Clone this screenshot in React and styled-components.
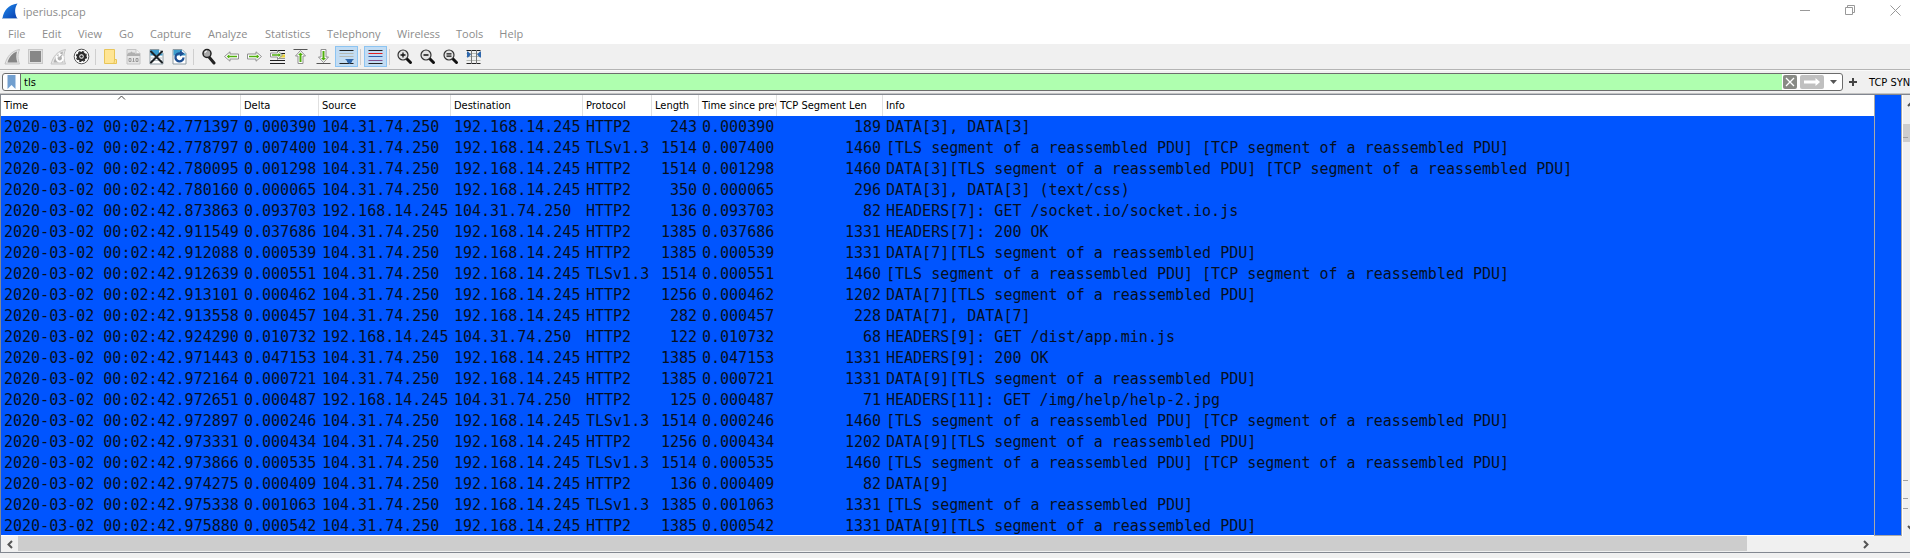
import React from "react";
import styled, { createGlobalStyle } from "styled-components";

const GlobalStyle = createGlobalStyle`
  * { box-sizing: border-box; }
  html, body { margin: 0; overflow: hidden; }
  body { background: #f0f0f0; font-family: "Open Sans", "Noto Sans", sans-serif; font-size: 11px; color: #000; }
  button { font: inherit; color: inherit; background: none; border: 0; padding: 0; margin: 0; }
`;

const Window = styled.main`
  display: flex;
  flex-direction: column;
  width: 100%;
  height: 100vh;
  background: #f0f0f0;
`;

const TitleBar = styled.header`
  display: flex;
  align-items: center;
  flex: none;
  height: 24px;
  padding-left: 2px;
  background: #fff;
`;

const Title = styled.h1`
  flex: 1;
  margin: 0 0 0 5px;
  font-size: 11px;
  font-weight: 400;
  line-height: 16px;
  color: #8c8c8c;
`;

const WindowButton = styled.button`
  display: flex;
  align-items: center;
  justify-content: center;
  width: 45px;
  height: 24px;
  padding-bottom: 4px;
  flex: none;
  color: #999;
`;

const WindowButtons = styled.div`
  display: flex;
  align-items: center;
  margin-right: -8px;
`;

const MenuBar = styled.nav`
  display: flex;
  flex: none;
  height: 21px;
  background: #fff;
  border-bottom: 1px solid #f0f0f0;
`;

const MenuItem = styled.button`
  padding: 0 8px;
  height: 20px;
  line-height: 20px;
  color: #8c8c8c;
  min-width: ${(p) => p.$width}px;
  text-align: left;
`;

const ToolBar = styled.div`
  display: flex;
  align-items: center;
  flex: none;
  height: 25px;
  padding: 0 0 1px 1px;
  border-bottom: 1px solid #b4b4b4;
`;

const ToolButton = styled.button`
  display: flex;
  align-items: center;
  justify-content: center;
  width: 23px;
  height: 21px;
  border: 1px solid ${(p) => (p.$on ? "#8cc4f2" : "transparent")};
  background: ${(p) => (p.$on ? "#c2dcf3" : "transparent")};
`;

const ToolDivider = styled.span`
  width: 1px;
  height: 16px;
  margin: 0 3px 0 2px;
  background: #cfcfcf;
`;

const FilterBar = styled.form`
  display: flex;
  align-items: center;
  flex: none;
  height: 24px;
  margin: 0;
  padding: 2px 0 2px 2px;
  border-top: 1px solid #fafafa;
  border-bottom: 1px solid #c3c3c3;
  overflow: hidden;
  font-family: "DejaVu Sans Condensed", "DejaVu Sans", sans-serif;
`;

const FilterField = styled.div`
  display: flex;
  flex: 1;
  align-items: center;
  height: 18px;
  border: 1px solid #6c6c6c;
  border-radius: 3px;
  background: #fff;
  overflow: hidden;
`;

const BookmarkButton = styled.button`
  display: flex;
  align-items: center;
  justify-content: center;
  width: 18px;
  height: 16px;
  border-right: 1px solid #6c6c6c;
`;

const FilterInput = styled.input`
  flex: 1;
  min-width: 0;
  height: 16px;
  padding: 0 3px;
  border: 0;
  outline: 0;
  background: #afffaf;
  color: #000;
  font: inherit;
`;

const FilterAction = styled.button`
  display: flex;
  align-items: center;
  justify-content: center;
  width: ${(p) => p.$width}px;
  height: 14px;
  margin-left: ${(p) => p.$gap}px;
  border-radius: 2px;
  background: ${(p) => p.$fill || "transparent"};
`;

const AddButton = styled.button`
  display: flex;
  align-items: center;
  justify-content: center;
  width: 20px;
  height: 18px;
  flex: none;
`;

const PresetButton = styled.button`
  flex: none;
  width: 47px;
  padding-left: 6px;
  white-space: nowrap;
  text-align: left;
`;

const PacketPane = styled.section`
  display: flex;
  flex-direction: column;
  flex: 1;
  min-height: 0;
  margin-bottom: 5px;
  border: 1px solid #828790;
  border-right: 0;
`;

const PacketView = styled.div`
  display: flex;
  flex: 1;
  min-height: 0;
`;

const TableArea = styled.div`
  flex: 1;
  min-width: 0;
  overflow: hidden;
  background: #0055ff;
  border-bottom: 1px solid #fff;
`;

const PacketTable = styled.table`
  width: 100%;
  table-layout: fixed;
  border-collapse: separate;
  border-spacing: 0;
`;

const HeadCell = styled.th`
  position: relative;
  height: 21px;
  padding: 1px 0 1px 3px;
  background: #fff;
  border-right: ${(p) => (p.$last ? "0" : "1px solid #e0e0e0")};
  font: 400 11px/19px "DejaVu Sans Condensed", "DejaVu Sans", sans-serif;
  text-align: left;
  white-space: nowrap;
  overflow: hidden;
`;

const SortMark = styled.svg`
  position: absolute;
  top: 0;
  left: calc(50% - 4px);
`;

const Cell = styled.td`
  height: 21px;
  padding: 1px 2px 0 3px;
  font: 15px/20px "DejaVu Sans Mono", "Liberation Mono", monospace;
  color: #06101f;
  text-align: ${(p) => (p.$right ? "right" : "left")};
  white-space: pre;
  overflow: hidden;
`;

const MiniMap = styled.div`
  width: 28px;
  flex: none;
  background: #0055ff;
  border: 1px solid #a9a9a9;
  border-top: 0;
`;

const VerticalTrack = styled.div`
  display: flex;
  flex-direction: column;
  width: 8px;
  flex: none;
  border-left: 1px solid #fff;
  overflow: hidden;
`;

const TrackArrow = styled.button`
  display: flex;
  align-items: center;
  justify-content: center;
  width: 17px;
  height: 17px;
  flex: none;
`;

const VerticalThumb = styled.div`
  display: flex;
  align-items: center;
  width: 17px;
  height: 18px;
  margin-top: 12px;
  padding-top: 8px;
  background: #cdcdcd;
`;

const TrackTick = styled.span`
  display: block;
  width: 5px;
  height: 1px;
  margin-top: ${(p) => p.$gap || 0}px;
  background: #a0a0a0;
`;

const TickGroup = styled.div`
  margin-top: auto;
  margin-bottom: 10px;
`;

const HorizontalTrack = styled.div`
  display: flex;
  flex: none;
  height: 16px;
  padding-right: 36px;
`;

const HorizontalArrow = styled.button`
  display: flex;
  align-items: center;
  justify-content: center;
  width: 17px;
  flex: none;
`;

const HorizontalRail = styled.div`
  flex: 1;
`;

const HorizontalThumb = styled.div`
  width: 94%;
  height: 15px;
  background: #cdcdcd;
`;

const Svg = ({ children, w = 17, h = 17 }) => (
  <svg width={w} height={h} viewBox={`0 0 ${w} ${h}`} fill="none" aria-hidden="true">
    {children}
  </svg>
);

const Page = ({ children }) => (
  <>
    <path d="M2 1.500h9l4 4v10.500H2z" fill="#fff" stroke="#8d9ba3" />
    {children}
  </>
);

const Lens = ({ children }) => (
  <>
    <path d="M10.500 10.500L14.500 14.500" stroke="#111" strokeWidth="3" strokeLinecap="round" />
    <circle cx="7" cy="7" r="5" fill="#e4e4e4" stroke="#333" strokeWidth="1.200" />
    {children}
  </>
);

const Arrow = ({ turn = 0 }) => (
  <g transform={`rotate(${turn} 8.500 8.500)`}>
    <path d="M1.500 8.500L7 3.800V6h8.500v5H7v2.200z" fill="#fff" stroke="#8f8f8f" />
    <path d="M3.800 8.500L6.300 6.300V7.700H14v1.600H6.300v1.400z" fill="#4fae0c" />
  </g>
);

const finOutline = "M1 16C3 9 7 3 15.500 1.500C13.500 6 13.500 11 15.500 16z";
const finCore = "M3.500 14.500C5 9 8.500 5 13 3.500C12 7 12 11 13.500 14.500z";

const icons = {
  start: (
    <>
      <path d={finOutline} fill="#e6e6e6" stroke="#c4c4c4" />
      <path d={finCore} fill="#858585" />
    </>
  ),
  stop: (
    <>
      <rect x="1.500" y="1.500" width="14" height="14" fill="#e0e0e0" stroke="#c8c8c8" />
      <rect x="3" y="3" width="11" height="11" fill="#878787" />
    </>
  ),
  restart: (
    <>
      <path d={finOutline} fill="#e6e6e6" stroke="#c4c4c4" />
      <path d={finCore} fill="#b0b0b0" />
      <path d="M7.500 8a3.200 3.200 0 1 0 4.500 0" stroke="#fff" strokeWidth="2" />
      <path d="M8.500 4.500v5l3.500-3z" fill="#fff" />
    </>
  ),
  options: (
    <>
      <circle cx="8.500" cy="8.500" r="7.300" fill="#fff" stroke="#555" />
      <circle cx="8.500" cy="8.500" r="3.500" stroke="#2b2b2b" strokeWidth="2.500" />
      <circle cx="8.500" cy="8.500" r="5" stroke="#2b2b2b" strokeWidth="1.200" strokeDasharray="2.200 1.727" />
      <circle cx="8.500" cy="8.500" r="1.300" fill="#2b2b2b" />
    </>
  ),
  open: (
    <>
      <path d="M2.500 1.500h10v14h-10z" fill="#ffe594" stroke="#e8c558" />
      <path d="M12.500 11.500h2v4h-4c1.500 0 2-1 2-4z" fill="#ffe594" stroke="#e8c558" />
    </>
  ),
  save: (
    <>
      <path d="M2 1.500h9l4 4v10.500H2z" fill="#e6e6e6" stroke="#c4c4c4" />
      <path d="M2 7c1-2 2-3 3-2 1-2 2-2 3 0 1-1 2 0 3 1h4v2H2z" fill="#b0b0b0" />
      <path d="M11 1.500v4h4" stroke="#c4c4c4" fill="#f5f5f5" />
      <path d="M4 10.500h2v3h-2zM11 10.500h2v3h-2z" stroke="#999" />
      <path d="M8.500 10v4M7.500 13.500h2" stroke="#999" />
    </>
  ),
  close: (
    <Page>
      <path d="M2.500 2h8.500l3.500 3.500v2h-12z" fill="#3c9ccc" />
      <path d="M11 2v3.500h3.500" fill="#fff" />
      <path d="M3 10h11M3 12.500h11" stroke="#b8c0c4" />
      <path d="M3 3.500L14 14.500M14 3.500L3 14.500" stroke="#1c2226" strokeWidth="2" strokeLinecap="round" />
    </Page>
  ),
  reload: (
    <Page>
      <path d="M2.500 2h8.500l3.500 3.500v2h-12z" fill="#3c9ccc" />
      <path d="M11 2v3.500h3.500" fill="#fff" />
      <path d="M12.500 9.500a4 4 0 1 1-3-4" stroke="#1d4f92" strokeWidth="2.300" />
      <path d="M9 2.500l4.500 3L9 8.500z" fill="#1d4f92" />
    </Page>
  ),
  find: (
    <>
      <path d="M9 9l5 6" stroke="#222" strokeWidth="3" strokeLinecap="round" />
      <circle cx="7" cy="5.500" r="4" fill="#aaa" stroke="#222" strokeWidth="1.500" />
      <path d="M5 5a2 2 0 0 1 2-2" stroke="#fff" />
    </>
  ),
  back: <Arrow />,
  forward: <Arrow turn={180} />,
  goto: (
    <>
      <path d="M1 2.500h15M10 5.500h6M1 12.500h15M1 15.500h15" stroke="#222" />
      <path d="M10 8h6" stroke="#ecd43a" strokeWidth="3" />
      <path d="M10 10.500h6" stroke="#999" />
      <path d="M1.500 5h7V2.500l5 4.500-5 4.500V9h-7z" fill="#fff" stroke="#8f8f8f" />
      <path d="M3 6.300h6.500V5l2.500 2-2.500 2V7.700H3z" fill="#4fae0c" />
    </>
  ),
  first: (
    <>
      <path d="M1.500 1.500h14" stroke="#555" />
      <path d="M8.500 2.500L13.500 8H11v7.500H6V8H3.500z" fill="#fff" stroke="#8f8f8f" />
      <path d="M8.500 4.500L11 7H9.500v7h-2V7H6z" fill="#4fae0c" />
    </>
  ),
  last: (
    <>
      <path d="M1.500 15.500h14" stroke="#555" />
      <path d="M8.500 14.500L13.500 9H11V1.500H6V9H3.500z" fill="#fff" stroke="#8f8f8f" />
      <path d="M8.500 12.500L11 10H9.500V3h-2v7H6z" fill="#4fae0c" />
    </>
  ),
  autoscroll: (
    <>
      <path d="M1.500 2.500h14M1.500 15.500h14" stroke="#222" />
      <path d="M1.500 5.500h14M1.500 8.500h14" stroke="#b5b9b3" />
      <path d="M7 11h9l-2 2v1l-2.500 2-2.500-2v-1z" fill="#2f67ac" />
    </>
  ),
  colorize: (
    <>
      <path d="M1.500 2.500h14M1.500 15.500h14" stroke="#222" />
      <path d="M1.500 5.500h14" stroke="#e22020" />
      <path d="M1.500 8.500h14" stroke="#2f5fa8" />
      <path d="M1.500 12.500h14" stroke="#80508c" />
    </>
  ),
  zoomIn: (
    <Lens>
      <path d="M4.500 7h5M7 4.500v5" stroke="#111" strokeWidth="1.300" />
    </Lens>
  ),
  zoomOut: (
    <Lens>
      <path d="M4.500 7h5" stroke="#111" strokeWidth="1.500" />
    </Lens>
  ),
  zoomReset: (
    <Lens>
      <path d="M4.500 5.800h5M4.500 8.200h5" stroke="#111" strokeWidth="1.200" />
    </Lens>
  ),
  resize: (
    <>
      <path d="M1.500 2.500h14M1.500 15.500h14" stroke="#222" />
      <path d="M1.500 5.500h14M1.500 8.500h14M1.500 12.500h14" stroke="#b5b9b3" />
      <path d="M6.500 2v14M11.500 2v14" stroke="#777" />
      <path d="M2 3.500h1l3 3-3 3H2zM16 3.500h-1l-3 3 3 3h1z" fill="#2f67ac" />
    </>
  ),
};

const tools = [
  ["start", "Start capture"], ["stop", "Stop capture"], ["restart", "Restart capture"], ["options", "Capture options"], null,
  ["open", "Open file"], ["save", "Save file"], ["close", "Close file"], ["reload", "Reload file"], null,
  ["find", "Find packet"], ["back", "Go back"], ["forward", "Go forward"], ["goto", "Go to packet"],
  ["first", "First packet"], ["last", "Last packet"], ["autoscroll", "Auto scroll", true], null,
  ["colorize", "Colorize", true], null,
  ["zoomIn", "Zoom in"], ["zoomOut", "Zoom out"], ["zoomReset", "Normal size"], ["resize", "Resize columns"],
];

const menus = [
  ["File", 34], ["Edit", 36], ["View", 41], ["Go", 31], ["Capture", 58], ["Analyze", 57],
  ["Statistics", 62], ["Telephony", 70], ["Wireless", 59], ["Tools", 43], ["Help", 40],
];

const columns = [
  ["Time", 240], ["Delta", 78], ["Source", 132], ["Destination", 132], ["Protocol", 69],
  ["Length", 47], ["Time since prev", 78], ["TCP Segment Len", 106], ["Info", null],
];

const A = "104.31.74.250";
const B = "192.168.14.245";
const TLS = "[TLS segment of a reassembled PDU]";
const TCP = "[TCP segment of a reassembled PDU]";

const packets = [
  ["42.771397", "0.000390", A, B, "HTTP2", 243, "0.000390", 189, "DATA[3], DATA[3]"],
  ["42.778797", "0.007400", A, B, "TLSv1.3", 1514, "0.007400", 1460, `${TLS} ${TCP}`],
  ["42.780095", "0.001298", A, B, "HTTP2", 1514, "0.001298", 1460, `DATA[3]${TLS} ${TCP}`],
  ["42.780160", "0.000065", A, B, "HTTP2", 350, "0.000065", 296, "DATA[3], DATA[3] (text/css)"],
  ["42.873863", "0.093703", B, A, "HTTP2", 136, "0.093703", 82, "HEADERS[7]: GET /socket.io/socket.io.js"],
  ["42.911549", "0.037686", A, B, "HTTP2", 1385, "0.037686", 1331, "HEADERS[7]: 200 OK"],
  ["42.912088", "0.000539", A, B, "HTTP2", 1385, "0.000539", 1331, `DATA[7]${TLS}`],
  ["42.912639", "0.000551", A, B, "TLSv1.3", 1514, "0.000551", 1460, `${TLS} ${TCP}`],
  ["42.913101", "0.000462", A, B, "HTTP2", 1256, "0.000462", 1202, `DATA[7]${TLS}`],
  ["42.913558", "0.000457", A, B, "HTTP2", 282, "0.000457", 228, "DATA[7], DATA[7]"],
  ["42.924290", "0.010732", B, A, "HTTP2", 122, "0.010732", 68, "HEADERS[9]: GET /dist/app.min.js"],
  ["42.971443", "0.047153", A, B, "HTTP2", 1385, "0.047153", 1331, "HEADERS[9]: 200 OK"],
  ["42.972164", "0.000721", A, B, "HTTP2", 1385, "0.000721", 1331, `DATA[9]${TLS}`],
  ["42.972651", "0.000487", B, A, "HTTP2", 125, "0.000487", 71, "HEADERS[11]: GET /img/help/help-2.jpg"],
  ["42.972897", "0.000246", A, B, "TLSv1.3", 1514, "0.000246", 1460, `${TLS} ${TCP}`],
  ["42.973331", "0.000434", A, B, "HTTP2", 1256, "0.000434", 1202, `DATA[9]${TLS}`],
  ["42.973866", "0.000535", A, B, "TLSv1.3", 1514, "0.000535", 1460, `${TLS} ${TCP}`],
  ["42.974275", "0.000409", A, B, "HTTP2", 136, "0.000409", 82, "DATA[9]"],
  ["42.975338", "0.001063", A, B, "TLSv1.3", 1385, "0.001063", 1331, TLS],
  ["42.975880", "0.000542", A, B, "HTTP2", 1385, "0.000542", 1331, `DATA[9]${TLS}`],
];

export default function App() {
  return (
    <Window>
      <GlobalStyle />
      <TitleBar>
        <Svg w={16} h={18}>
          <defs>
            <linearGradient id="fin" x1="0" y1="0" x2="1" y2="1">
              <stop offset="0" stopColor="#1f8df0" />
              <stop offset="1" stopColor="#0a3fae" />
            </linearGradient>
          </defs>
          <path d="M0.500 15C2 7.500 6 2 15.500 0.500C12.500 5 12.500 10 15 15z" fill="url(#fin)" />
          <path d="M0 15.500h15.500" stroke="#9db8dc" />
        </Svg>
        <Title>iperius.pcap</Title>
        <WindowButtons>
          <WindowButton aria-label="Minimize">
            <Svg w={11} h={11}><path d="M0 5.500h10" stroke="currentColor" /></Svg>
          </WindowButton>
          <WindowButton aria-label="Restore">
            <Svg w={11} h={11}>
              <path d="M0.500 2.500h7v7h-7zM2.500 2.500v-2h7v7h-2" stroke="currentColor" />
            </Svg>
          </WindowButton>
          <WindowButton aria-label="Close">
            <Svg w={11} h={11}><path d="M0.500 0.500l10 10M10.500 0.500l-10 10" stroke="currentColor" /></Svg>
          </WindowButton>
        </WindowButtons>
      </TitleBar>

      <MenuBar aria-label="Main menu">
        {menus.map(([name, width]) => (
          <MenuItem key={name} $width={width}>{name}</MenuItem>
        ))}
      </MenuBar>

      <ToolBar role="toolbar" aria-label="Main toolbar">
        {tools.map((tool, i) =>
          tool ? (
            <ToolButton key={tool[0]} $on={tool[2]} aria-label={tool[1]}>
              <Svg>{icons[tool[0]]}</Svg>
            </ToolButton>
          ) : (
            <ToolDivider key={i} />
          )
        )}
      </ToolBar>

      <FilterBar onSubmit={(e) => e.preventDefault()}>
        <FilterField>
          <BookmarkButton type="button" aria-label="Filter bookmarks">
            <Svg w={9} h={14}><path d="M0.500 0h8v14l-4-4-4 4z" fill="#729fcf" /></Svg>
          </BookmarkButton>
          <FilterInput aria-label="Display filter" defaultValue="tls" spellCheck={false} />
          <FilterAction type="button" aria-label="Clear filter" $width={14} $gap={1} $fill="#888a85">
            <Svg w={14} h={14}><path d="M3 3l8 8M11 3l-8 8" stroke="#fff" strokeWidth="1.300" /></Svg>
          </FilterAction>
          <FilterAction type="submit" aria-label="Apply filter" $width={24} $gap={3} $fill="#c0c0c0">
            <Svg w={24} h={14}><path d="M4 5.500h11.500V3l4.500 4-4.500 4V8.500H4z" fill="#fff" /></Svg>
          </FilterAction>
          <FilterAction type="button" aria-label="Filter history" $width={18} $gap={0}>
            <Svg w={7} h={4}><path d="M0 0h7L3.500 4z" fill="#555" /></Svg>
          </FilterAction>
        </FilterField>
        <AddButton type="button" aria-label="Add filter button">
          <Svg w={8} h={8}><path d="M0 4h8M4 0v8" stroke="#444" strokeWidth="2" /></Svg>
        </AddButton>
        <PresetButton type="button">TCP SYN</PresetButton>
      </FilterBar>

      <PacketPane>
        <PacketView>
          <TableArea>
            <PacketTable>
              <colgroup>
                {columns.map(([name, width]) => <col key={name} width={width || undefined} />)}
              </colgroup>
              <thead>
                <tr>
                  {columns.map(([name, width], i) => (
                    <HeadCell key={name} scope="col" $last={!width}>
                      {name}
                      {i === 0 && (
                        <SortMark width="9" height="5" viewBox="0 0 9 5" fill="none">
                          <path d="M1 4.500l3.500-3.500L8 4.500" stroke="#444" />
                        </SortMark>
                      )}
                    </HeadCell>
                  ))}
                </tr>
              </thead>
              <tbody>
                {packets.map((packet) => (
                  <tr key={packet[0]}>
                    {packet.map((value, i) => (
                      <Cell key={i} $right={i === 5 || i === 7}>
                        {i === 0 ? `2020-03-02 00:02:${value}` : value}
                      </Cell>
                    ))}
                  </tr>
                ))}
              </tbody>
            </PacketTable>
          </TableArea>
          <MiniMap />
          <VerticalTrack>
            <TrackArrow aria-label="Scroll up">
              <Svg w={9} h={6}><path d="M1 5l3.500-3.500L8 5" stroke="#555" strokeWidth="2" /></Svg>
            </TrackArrow>
            <VerticalThumb><TrackTick /></VerticalThumb>
            <TickGroup>
              <TrackTick />
              <TrackTick $gap={17} />
              <TrackTick $gap={9} />
            </TickGroup>
            <TrackArrow aria-label="Scroll down">
              <Svg w={9} h={6}><path d="M1 1l3.500 3.500L8 1" stroke="#555" strokeWidth="2" /></Svg>
            </TrackArrow>
          </VerticalTrack>
        </PacketView>
        <HorizontalTrack>
          <HorizontalArrow aria-label="Scroll left">
            <Svg w={6} h={9}><path d="M5 1L1.500 4.500L5 8" stroke="#555" strokeWidth="2" /></Svg>
          </HorizontalArrow>
          <HorizontalRail><HorizontalThumb /></HorizontalRail>
          <HorizontalArrow aria-label="Scroll right">
            <Svg w={6} h={9}><path d="M1 1l3.500 3.500L1 8" stroke="#555" strokeWidth="2" /></Svg>
          </HorizontalArrow>
        </HorizontalTrack>
      </PacketPane>
    </Window>
  );
}
